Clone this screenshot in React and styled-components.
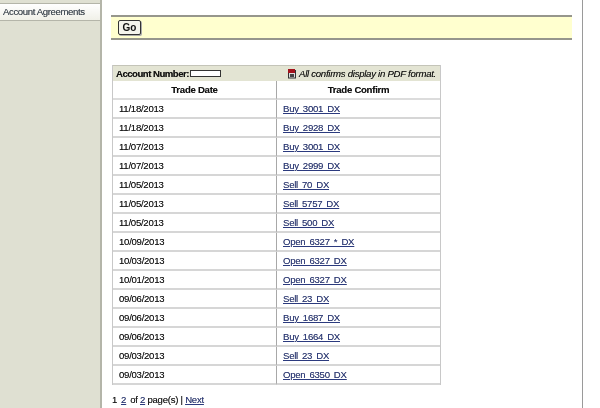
import React from "react";
import styled, { createGlobalStyle } from "styled-components";

const Global = createGlobalStyle`
  html, body { margin: 0; padding: 0; background: #fff; overflow: hidden; }
  body { font-family: "Liberation Sans", Arial, sans-serif; font-size: 9.6px; letter-spacing: -0.27px; color: #111; text-shadow: 0 0 0.5px rgba(0,0,0,0.5); }
`;
const Page = styled.div`
  display: flex; width: 600px; height: 408px; overflow: hidden; filter: blur(0.35px);
`;
const Sidebar = styled.aside`
  width: 100px; flex: none; background: #dfe0d2; border-right: 2px solid #b4b5a9;
  padding-top: 3px;
`;
const NavTab = styled.div`
  height: 16px; line-height: 16px; padding-left: 3px; font-size: 9.6px; letter-spacing: -0.38px; color: #3f4a55;
  background: linear-gradient(#ffffff, #f0f0e8); border-top: 1px solid #b4b5a9; border-bottom: 1px solid #b4b5a9;
`;
const Main = styled.main`
  width: 461px; flex: none; padding: 15px 10px 0 9px; border-right: 1px solid #9a9a9a;
`;
const GoBar = styled.div`
  height: 21px; display: flex; align-items: center; padding-left: 7px;
  background: #ffffcf; border-top: 2px solid #96968c; border-bottom: 2px solid #96968c;
`;
const GoButton = styled.button`
  width: 23px; height: 15px; padding: 0; font: bold 10px "Liberation Sans", Arial, sans-serif; color: #111;
  background: #f4f4ec; border: 1px solid #333; border-radius: 2px; box-shadow: 1px 1px 0 #aaa;
`;
const TableWrap = styled.div`
  width: 327px; margin: 25px 0 0 1px; border: 1px solid #c8c8c8; border-top: 0; border-bottom: 0;
`;
const TitleBar = styled.div`
  height: 16px; display: flex; align-items: center; justify-content: space-between;
  background: #e3e4d3; padding: 0 4px 0 3px; border-top: 1px solid #c4c4b8; box-sizing: border-box;
`;
const AccountLabel = styled.div`
  display: flex; align-items: center; gap: 1px; font-weight: bold; letter-spacing: -0.5px;
`;
const AccountBox = styled.span`
  width: 29px; height: 5px; background: #fff; border: 1px solid #333; display: inline-block;
`;
const Note = styled.div`
  display: flex; align-items: center; gap: 2px; font-style: italic;
`;
const Grid = styled.div`
  display: grid; grid-template-columns: 163px 1fr;
`;
const HeadCell = styled.div`
  height: 17px; line-height: 18px; text-align: center; font-weight: bold;
  border-bottom: 2px solid #dcdcdc;
  ${(p) => p.$right && "border-left: 1px solid #a8a8a8;"}
`;
const Cell = styled.div`
  height: 17px; line-height: 18px; padding-left: 6px;
  border-bottom: 2px solid #d6d6d6;
  ${(p) => p.$right && "border-left: 1px solid #a8a8a8;"}
`;
const ConfirmLink = styled.a`
  color: #2b3a7e; text-decoration: underline; word-spacing: 1.7px;
`;
const Pager = styled.div`
  margin: 9px 0 0 1px; display: flex; gap: 4px; white-space: pre;
`;
const PagerLink = styled.a`
  color: #2b3a7e; text-decoration: underline;
`;
const PdfIcon = () => (
  <svg width="10" height="10" viewBox="0 0 10 10">
    <rect x="1.5" y="1.5" width="7" height="7.5" fill="#ddd" stroke="#333" />
    <rect x="1" y="0" width="7" height="4" fill="#a3121c" />
    <rect x="3" y="5" width="4" height="3" fill="#444" />
  </svg>
);
const rows = [
  ["11/18/2013", "Buy 3001 DX"], ["11/18/2013", "Buy 2928 DX"], ["11/07/2013", "Buy 3001 DX"],
  ["11/07/2013", "Buy 2999 DX"], ["11/05/2013", "Sell 70 DX"], ["11/05/2013", "Sell 5757 DX"],
  ["11/05/2013", "Sell 500 DX"], ["10/09/2013", "Open 6327 * DX"], ["10/03/2013", "Open 6327 DX"],
  ["10/01/2013", "Open 6327 DX"], ["09/06/2013", "Sell 23 DX"], ["09/06/2013", "Buy 1687 DX"],
  ["09/06/2013", "Buy 1664 DX"], ["09/03/2013", "Sell 23 DX"], ["09/03/2013", "Open 6350 DX"],
];
export default function App() {
  return (
    <Page>
      <Global />
      <Sidebar><NavTab>Account Agreements</NavTab></Sidebar>
      <Main>
        <GoBar><GoButton>Go</GoButton></GoBar>
        <TableWrap>
          <TitleBar>
            <AccountLabel>Account Number:<AccountBox /></AccountLabel>
            <Note><PdfIcon />All confirms display in PDF format.</Note>
          </TitleBar>
          <Grid>
            <HeadCell>Trade Date</HeadCell>
            <HeadCell $right>Trade Confirm</HeadCell>
            {rows.map(([d, c], i) => (
              <React.Fragment key={i}>
                <Cell>{d}</Cell>
                <Cell $right><ConfirmLink href="#">{c}</ConfirmLink></Cell>
              </React.Fragment>
            ))}
          </Grid>
        </TableWrap>
        <Pager>
          <span>1</span><PagerLink href="#">2</PagerLink><span>of <PagerLink href="#">2</PagerLink> page(s) | <PagerLink href="#">Next</PagerLink></span>
        </Pager>
      </Main>
    </Page>
  );
}
